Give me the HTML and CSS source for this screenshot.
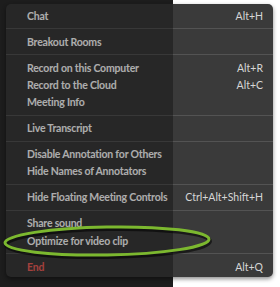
FILE: index.html
```html
<!DOCTYPE html>
<html lang="en">
<head>
<meta charset="UTF-8">
<title>More menu</title>
<link rel="stylesheet" href="styles.css">
</head>
<body>

<div class="stage">
    <div class="menu">
        <div class="item"><span>Chat</span><span class="key">Alt+H</span></div>
        <div class="sep"></div>
        <div class="item"><span>Breakout Rooms</span></div>
        <div class="sep"></div>
        <div class="item"><span>Record on this Computer</span><span class="key">Alt+R</span></div>
        <div class="item"><span>Record to the Cloud</span><span class="key">Alt+C</span></div>
        <div class="item"><span>Meeting Info</span></div>
        <div class="sep"></div>
        <div class="item"><span>Live Transcript</span></div>
        <div class="sep"></div>
        <div class="item"><span>Disable Annotation for Others</span></div>
        <div class="item"><span>Hide Names of Annotators</span></div>
        <div class="sep"></div>
        <div class="item"><span>Hide Floating Meeting Controls</span><span class="key">Ctrl+Alt+Shift+H</span></div>
        <div class="sep"></div>
        <div class="item"><span>Share sound</span></div>
        <div class="item"><span>Optimize for video clip</span></div>
        <div class="sep"></div>
        <div class="item end"><span>End</span><span class="key">Alt+Q</span></div>
    </div>

    <!-- darker window behind the left half -->
    <div class="shade"></div>

    <!-- hand drawn highlight -->
    <svg class="mark" width="280" height="287" viewBox="0 0 280 287">
        <ellipse cx="108" cy="243" rx="102" ry="14" fill="none" stroke="rgba(0,0,0,0.55)" stroke-width="4" transform="rotate(-1 108 243)"/>
        <ellipse cx="107" cy="241" rx="102" ry="14" fill="none" stroke="#7cb82f" stroke-width="3" transform="rotate(-1 107 241)"/>
    </svg>
</div>

</body>
</html>
```

FILE: styles.css
```css
body {
    margin: 0;
    background: #ffffff;
}

.stage {
    position: relative;
    width: 280px;
    height: 287px;
    overflow: hidden;
    background: linear-gradient(to right, #2b2b2b 0, #2b2b2b 173px, #ffffff 173px);
    padding: 4px 8px 0 6px;
    box-sizing: border-box;
}

/* the popup menu */
.menu {
    width: 267px;
    height: 273px;
    box-sizing: border-box;
    background-color: #3a3a3a;
    border-radius: 5px;
    padding: 3px 0 0 0;
    box-shadow: 0px 2px 4px rgba(0, 0, 0, 0.45);
    font-family: "Lato", sans-serif;
    font-size: 10.5px;
    font-weight: 700;
    letter-spacing: -0.2px;
    color: #ffffff;
}

.item {
    height: 17.25px;
    display: flex;
    align-items: center;
    justify-content: space-between;
    padding: 0 10px 0 21px;
}

.key {
    font-weight: 400;
    letter-spacing: 0;
    color: #d6d6d6;
}

.end {
    color: #f0605a;
}

.sep {
    height: 1px;
    background-color: #535353;
    margin: 4px 0 3.75px 0;
}

/* dark overlay on the left side */
.shade {
    position: absolute;
    top: 0;
    left: 0;
    width: 173px;
    height: 287px;
    background: rgba(0, 0, 0, 0.32);
}

.mark {
    position: absolute;
    top: 0;
    left: 0;
}
```
